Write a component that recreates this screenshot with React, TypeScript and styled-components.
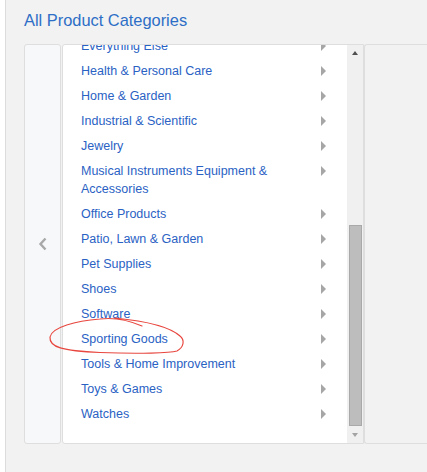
import React from "react";
import styled, { createGlobalStyle } from "styled-components";

const Global = createGlobalStyle`
  html, body { margin: 0; padding: 0; background: #ffffff; }
  body { font-family: "Liberation Sans", Arial, sans-serif; }
`;

const Page = styled.div`
  width: 427px;
  height: 472px;
  overflow: hidden;
  padding-left: 5px;
  box-sizing: border-box;
`;

const Panel = styled.div`
  height: 100%;
  background: #f2f2f2;
  border-left: 1px solid #dcdcdc;
  padding: 10px 0 0 18px;
  box-sizing: border-box;
  display: flex;
  flex-direction: column;
`;

const Title = styled.h2`
  margin: 0;
  font-size: 16.4px;
  line-height: 20px;
  font-weight: normal;
  color: #2d6ec6;
  white-space: nowrap;
`;

const Browser = styled.div`
  margin-top: 14px;
  display: flex;
  height: 400px;
  width: 440px;
`;

const BackColumn = styled.div`
  width: 37px;
  flex: none;
  box-sizing: border-box;
  background: #f7f8fa;
  border: 1px solid #dedede;
  border-radius: 3px;
  display: flex;
  align-items: center;
  justify-content: center;
  margin-right: 1px;
`;

const ListBox = styled.div`
  width: 302px;
  flex: none;
  box-sizing: border-box;
  border: 1px solid #dedede;
  border-radius: 3px 0 0 3px;
  background: #ffffff;
  display: flex;
`;

const Viewport = styled.div`
  flex: 1;
  overflow: hidden;
  display: flex;
  flex-direction: column;
  justify-content: flex-end;
`;

const List = styled.ul`
  list-style: none;
  margin: 0;
  padding: 0 0 16px 0;
  flex: none;
`;

const Row = styled.li`
  display: flex;
  align-items: flex-start;
  padding: 3px 21px 4px 18px;
  font-size: 12.5px;
  line-height: 18px;
  color: #2a62c4;
  cursor: pointer;
`;

const Label = styled.span`
  flex: 1;
  margin-right: 6px;
`;

const Arrow = styled.span`
  flex: none;
  width: 0;
  height: 0;
  margin-top: 4px;
  border-top: 5px solid transparent;
  border-bottom: 5px solid transparent;
  border-left: 5px solid #a6a6a6;
`;

const ScrollBar = styled.div`
  width: 16px;
  flex: none;
  background: #f0f0f0;
  display: flex;
  flex-direction: column;
`;

const ScrollButton = styled.div`
  height: 17px;
  flex: none;
  display: flex;
  align-items: center;
  justify-content: center;
`;

const ScrollTriangle = styled.span<{ $up?: boolean; $color: string }>`
  width: 0;
  height: 0;
  border-left: 3.5px solid transparent;
  border-right: 3.5px solid transparent;
  ${(p) =>
    p.$up
      ? `border-bottom: 4px solid ${p.$color}; margin-top: -2px;`
      : `border-top: 4px solid ${p.$color}; margin-top: 1px;`}
`;

const Track = styled.div`
  flex: 1;
  display: flex;
  flex-direction: column;
  justify-content: flex-end;
  align-items: center;
`;

const Thumb = styled.div`
  width: 13px;
  height: 201px;
  box-sizing: border-box;
  background: #bdbdbd;
  border: 1px solid #a9a9a9;
  margin-left: 1px;
`;

const SidePanel = styled.div`
  flex: 1;
  box-sizing: border-box;
  border: 1px solid #dedede;
  border-right: none;
  border-radius: 3px 0 0 3px;
  background: #f2f2f2;
`;

const Annotation = styled.svg`
  position: absolute;
  left: 0;
  top: 0;
  width: 427px;
  height: 472px;
  pointer-events: none;
`;

const Root = styled.div`
  position: relative;
`;

const categories = [
  "Everything Else",
  "Health & Personal Care",
  "Home & Garden",
  "Industrial & Scientific",
  "Jewelry",
  "Musical Instruments Equipment & Accessories",
  "Office Products",
  "Patio, Lawn & Garden",
  "Pet Supplies",
  "Shoes",
  "Software",
  "Sporting Goods",
  "Tools & Home Improvement",
  "Toys & Games",
  "Watches",
];

export default function App() {
  return (
    <Root>
      <Global />
      <Page>
        <Panel>
          <Title>All Product Categories</Title>
          <Browser>
            <BackColumn>
              <svg width="10" height="14" viewBox="0 0 10 14">
                <path d="M7.5 1.5 L2.5 7 L7.5 12.5" fill="none" stroke="#a8a8a8" strokeWidth="2.4" />
              </svg>
            </BackColumn>
            <ListBox>
              <Viewport>
                <List>
                  {categories.map((c) => (
                    <Row key={c}>
                      <Label>{c}</Label>
                      <Arrow />
                    </Row>
                  ))}
                </List>
              </Viewport>
              <ScrollBar>
                <ScrollButton>
                  <ScrollTriangle $up $color="#505050" />
                </ScrollButton>
                <Track>
                  <Thumb />
                </Track>
                <ScrollButton>
                  <ScrollTriangle $color="#a3a3a3" />
                </ScrollButton>
              </ScrollBar>
            </ListBox>
            <SidePanel />
          </Browser>
        </Panel>
      </Page>
      <Annotation viewBox="0 0 427 472">
        <path
          d="M142 326 C128 320 116 317 100 319 C76 321 52 327 50 337 C49 347 62 351 100 352.5 C140 354 170 353 177 351 C184 347 185 340 180 336 C170 327 145 321 115 318"
          fill="none"
          stroke="#e8473f"
          strokeWidth="1.2"
          strokeLinecap="round"
        />
      </Annotation>
    </Root>
  );
}
